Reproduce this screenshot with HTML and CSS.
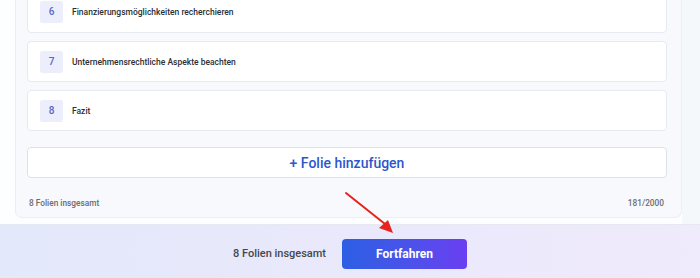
FILE: index.html
```html
<!DOCTYPE html>
<html lang="de">
<head>
<meta charset="utf-8">
<title>Folien</title>
<link rel="stylesheet" href="styles.css">
</head>
<body>
<div class="page">
  <div class="panel">
    <div class="slides">
      <div class="slide"><span class="num">6</span><span class="title">Finanzierungsmöglichkeiten recherchieren</span></div>
      <div class="slide"><span class="num">7</span><span class="title">Unternehmensrechtliche Aspekte beachten</span></div>
      <div class="slide"><span class="num">8</span><span class="title">Fazit</span></div>
    </div>
    <button class="add">+ Folie hinzufügen</button>
    <div class="panel-foot">
      <span>8 Folien insgesamt</span>
      <span>181/2000</span>
    </div>
  </div>
</div>
<div class="bar">
  <span class="count">8 Folien insgesamt</span>
  <button class="go">Fortfahren</button>
</div>
<svg class="arrow" width="60" height="50" viewBox="0 0 60 50">
  <path d="M2 2 L41 33" stroke="#e8221c" stroke-width="2" stroke-linecap="round" fill="none"/>
  <path d="M49 42 L35 37 L44 29 Z" fill="#e8221c"/>
</svg>
</body>
</html>
```
FILE: styles.css
```css
* { box-sizing: border-box; }
html, body { margin: 0; padding: 0; }
body {
  width: 700px;
  height: 278px;
  overflow: hidden;
  background: #fdfeff;
  font-family: Roboto, "Liberation Sans", sans-serif;
  position: relative;
}
.page {
  display: flow-root;
  padding: 0 18px 0 15px;
  background: linear-gradient(to right, #fdfeff 0, #fdfeff 682px, #f4f8fb 682px);
  height: 224px;
}
.panel {
  margin-top: -10px;
  background: #f8f9fc;
  border: 1px solid #eceef3;
  border-top: none;
  border-radius: 0 0 7px 7px;
  padding: 0 14px 0 11px;
}
.slides {
  display: flex;
  flex-direction: column;
  gap: 8px;
}
.slide {
  height: 41px;
  background: #fff;
  border: 1px solid #e7eaf0;
  border-radius: 4px;
  display: flex;
  align-items: center;
  padding-left: 12px;
  gap: 9px;
}
.slide:first-child { height: 43px; }
.num {
  width: 23px;
  height: 22px;
  background: #eceffb;
  color: #5867c4;
  font-size: 10px;
  font-weight: 500;
  display: flex;
  align-items: center;
  justify-content: center;
  border-radius: 2px;
}
.title {
  font-size: 8.5px;
  font-weight: 500;
  color: #2d2f33;
}
.add {
  display: block;
  width: 100%;
  height: 31px;
  margin-top: 16px;
  background: #fff;
  border: 1px solid #dde2ea;
  border-radius: 4px;
  color: #2c57cc;
  font-family: inherit;
  font-size: 14px;
  font-weight: 500;
}
.panel-foot {
  display: flex;
  justify-content: space-between;
  padding: 20px 3px 9px 2px;
  font-size: 8.3px;
  font-weight: 500;
  color: #6a6c70;
  line-height: 10px;
}
.bar {
  height: 58px;
  border-top: 1px solid #e6e9f2;
  background: linear-gradient(to right, #e3e8fa, #eae9fb 60%, #efeafc);
  display: flex;
  align-items: center;
  justify-content: center;
  gap: 16px;
}
.count {
  font-size: 11px;
  font-weight: 500;
  color: #45474c;
}
.go {
  width: 125px;
  height: 30px;
  border: none;
  border-radius: 4px;
  background: linear-gradient(to right, #2c5fe4, #4c52ea 55%, #6b3ef2);
  color: #fff;
  font-family: inherit;
  font-size: 12px;
  font-weight: 700;
}
.arrow {
  position: absolute;
  left: 344px;
  top: 191px;
}
```
